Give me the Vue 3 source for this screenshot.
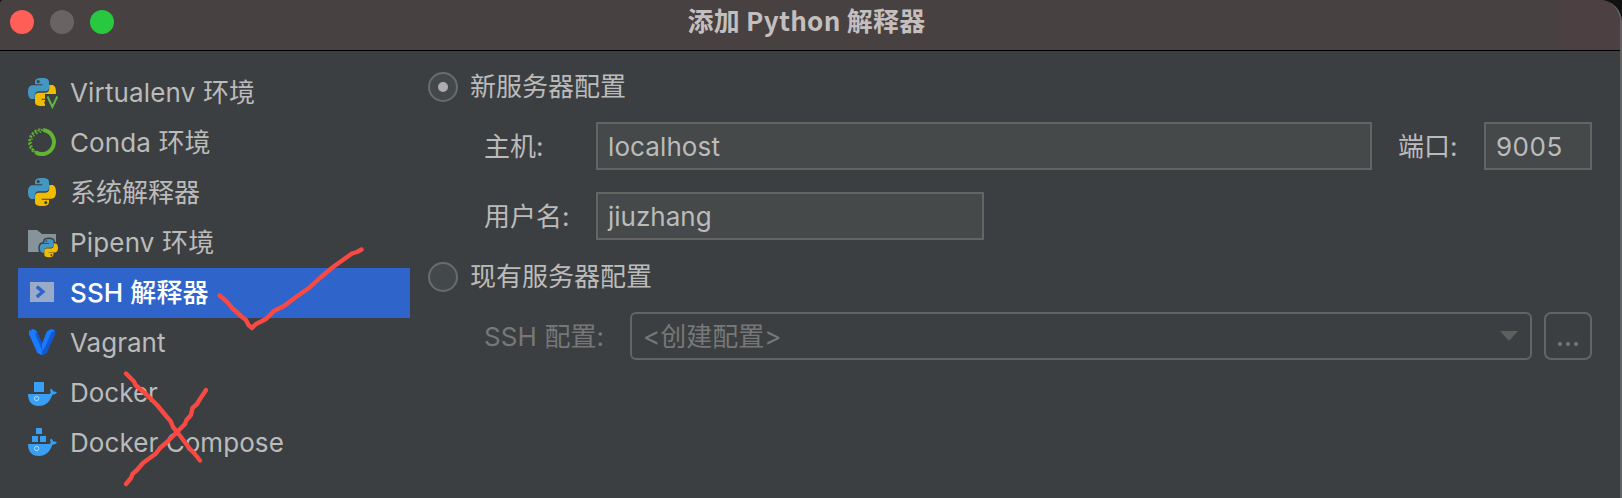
<script setup>
const items = [
  { label: 'Virtualenv 环境', icon: 'virtualenv', cls: 'w-virtualenv' },
  { label: 'Conda 环境', icon: 'conda', cls: 'w-conda' },
  { label: '系统解释器', icon: 'python', cls: 'w-system' },
  { label: 'Pipenv 环境', icon: 'pipenv', cls: 'w-pipenv' },
  { label: 'SSH 解释器', icon: 'ssh', cls: 'w-ssh', selected: true },
  { label: 'Vagrant', icon: 'vagrant', cls: 'w-vagrant' },
  { label: 'Docker', icon: 'docker', cls: 'w-docker' },
  { label: 'Docker Compose', icon: 'compose', cls: 'w-compose' },
]
</script>

<template>
  <div class="backdrop">
    <div class="window">
      <header class="titlebar">
        <div class="lights">
          <span class="light close"></span>
          <span class="light minimize"></span>
          <span class="light zoom"></span>
        </div>
        <h1 class="title">添加 Python 解释器</h1>
      </header>

      <main class="body">
        <svg class="defs" width="0" height="0" aria-hidden="true">
          <defs>
            <path id="snake" fill-rule="evenodd" d="M14 0C9 0 7 1.2 7 4V6.3H14.3V7.3H4.6C1.6 7.3 0 9.8 0 14C0 18.4 1.5 21 4.3 21H6.7V17.6C6.7 15 8.5 13.3 11 13.3H17.3C19.6 13.3 21 12 21 9.8V4C21 1.2 19 0 14 0ZM10.2 1.9A1.5 1.5 0 1 1 10.2 4.9A1.5 1.5 0 1 1 10.2 1.9Z" />
            <g id="python">
              <use href="#snake" fill="#4397c4" />
              <use href="#snake" fill="#f0bc00" transform="rotate(180 14 14)" />
            </g>
            <g id="whale">
              <path fill="#389ff5" d="M0 14H21.4C22.6 13.6 22.9 12.9 22.5 11.8C22 10.6 22.2 9.4 23 8.6C24.2 9.4 25 10.4 25.2 11.6C26.6 11.3 27.9 11.6 29 12.3C28 13.8 26.4 14.6 24.3 14.7C22 21.7 17.6 26 10.8 26C3.8 26 0 21.6 0 14Z" />
              <circle cx="8.6" cy="18.5" r="2.2" fill="none" stroke="#b8dcf8" stroke-width="1" />
            </g>
          </defs>
        </svg>

        <nav class="sidebar">
          <div v-for="item in items" :key="item.label" class="item" :class="{ selected: item.selected }">
            <svg class="icon" viewBox="0 0 32 32">
              <g v-if="item.icon === 'virtualenv'" transform="translate(2 2)">
                <use href="#python" />
                <path d="M17 16H32V32H17Z" fill="#3c3f41" />
                <path d="M19.5 18.5L24.4 29L29.3 18.5" fill="none" stroke="#62b543" stroke-width="2" />
              </g>
              <g v-else-if="item.icon === 'conda'" fill="none" stroke="#62b533">
                <path d="M17.2 4.1A12 12 0 1 1 9.6 26.2" stroke-width="4" />
                <path d="M9.6 26.2A12 12 0 0 1 17.2 4.1" stroke-width="1.8" stroke-dasharray="2 1.3" />
                <path d="M8 24.2A11 11 0 0 1 15.5 6" stroke-width="1.5" stroke-dasharray="1.5 2.2" />
                <path d="M7.2 26A13.3 13.3 0 0 1 15.5 2.8" stroke-width="1.3" stroke-dasharray="2.3 1.7" />
              </g>
              <use v-else-if="item.icon === 'python'" href="#python" x="2" y="2" />
              <g v-else-if="item.icon === 'pipenv'">
                <path d="M2 4H11L16 8H30V26H2Z" fill="#87939a" />
                <g transform="translate(13.8 13) scale(.65)">
                  <g fill="#3c3f41" stroke="#3c3f41" stroke-width="4.500">
                    <use href="#snake" />
                    <use href="#snake" transform="rotate(180 14 14)" />
                  </g>
                  <use href="#python" />
                </g>
              </g>
              <g v-else-if="item.icon === 'ssh'">
                <path d="M4 6H28V26H4Z" fill="#9aabca" />
                <path d="M10.8 10.6L16.8 15.8L10.8 21" fill="none" stroke="#2f65ca" stroke-width="3.5" />
              </g>
              <g v-else-if="item.icon === 'vagrant'">
                <path d="M3 4.5L7 3L11 5.5L16 18L21 5.5L25 3L29 4.5V8L20.5 27L16 29.3L11.5 27L3 8Z" fill="#1868f2" />
                <path d="M5.5 4L7 3L11 5.3L10 8.5L16 20V29L11.5 27L3 8V4.5L6 6Z" fill="#1a7bff" />
                <path d="M11 5.3L16 18L17.8 22L16 24L9.3 8.2Z" fill="#1159d1" />
                <path d="M29 4.5V8L20.5 27L16 29.3V25L19.3 21L25.3 6.2Z" fill="#1159d1" />
                <path d="M21 5.5L25 3L29 4.5L25.3 6.2L18 23L16 24V18Z" fill="#1a7bff" />
              </g>
              <g v-else-if="item.icon === 'docker'" transform="translate(2 4)">
                <path d="M6 2H16V12H6Z" fill="#389ff5" />
                <use href="#whale" />
              </g>
              <g v-else transform="translate(2 4)">
                <path d="M8 -2H14V4H8ZM4 6H10V12H4ZM12 6H18V12H12Z" fill="#389ff5" />
                <use href="#whale" />
              </g>
            </svg>
            <span class="label" :class="item.cls">{{ item.label }}</span>
          </div>
        </nav>

        <section class="form">
          <div class="option">
            <span class="radio checked"></span><span>新服务器配置</span>
          </div>
          <div class="row">
            <span class="caption">主机:</span>
            <div class="field host"><span class="value t-host">localhost</span></div>
            <span class="port-caption">端口:</span>
            <div class="field port"><span class="value t-port">9005</span></div>
          </div>
          <div class="row second">
            <span class="caption">用户名:</span>
            <div class="field user"><span class="value">jiuzhang</span></div>
          </div>
          <div class="option">
            <span class="radio"></span><span>现有服务器配置</span>
          </div>
          <div class="row disabled">
            <span class="caption wide">SSH 配置:</span>
            <div class="combo">
              <span class="value">&lt;创建配置&gt;</span>
              <svg class="arrow" viewBox="0 0 18 10"><path d="M0 0H18L9 10Z" fill="#5e6060" /></svg>
            </div>
            <div class="more"><i></i><i></i><i></i></div>
          </div>
        </section>
      </main>
    </div>

    <svg class="marks" viewBox="0 0 1622 498">
      <path d="M219.5 295.5L224 299L229 304L232 308L239 314L242 317L246 320L248.5 325L252 328L256 324L266 319L274 311L284 306L296 297L309 288L321 277L333 267L345 258.500L352 253.500L357 252L361.500 249.500" />
      <path d="M126 373.500L134 381.500L135.500 385L148 396L157 405L167 417L170.500 421L173 427L178 433L184 441L190 449L194 453L200 460.500" />
      <path d="M206 390L200 399L197 404L192.500 408L191 415L186.500 420L185 424L178 431L167 442L160 448L156 453.500L143 463L137 470L132.500 474L131 478L126 484" />
    </svg>
  </div>
</template>

<style>
body {
  margin: 0;
  background: #3c3f41;
}
</style>

<style scoped>
.backdrop {
  position: relative;
  width: 1622px;
  height: 498px;
  overflow: hidden;
  background: #111;
  font-family: Inter, "Noto Sans CJK SC", sans-serif;
  font-size: 26px;
  line-height: 32px;
  color: #bbb;
  white-space: nowrap;
}
.window {
  box-sizing: border-box;
  height: 498px;
  border-right: 2px solid #626263;
  border-radius: 4px 22px 0 0;
  overflow: hidden;
  background: #3c3f41;
}
.titlebar {
  display: grid;
  grid-template-columns: 1fr auto 1fr;
  height: 50px;
  border-bottom: 1px solid #000;
  background: linear-gradient(90deg, #484141 0 1560px, #4c4042 1564px);
}
.lights {
  display: flex;
  gap: 16px;
  padding: 10px 0 0 10px;
}
.light {
  width: 24px;
  height: 24px;
  border-radius: 50%;
}
.close { background: #ff5f57; }
.minimize { background: #696363; }
.zoom { background: #28c840; }
.title {
  margin: 0;
  padding-right: 7px;
  font: 700 26px/40px "Noto Sans CJK SC", sans-serif;
  letter-spacing: .28px;
  color: #c4bfbf;
}
.body {
  display: flex;
  padding: 17px 28px 0 18px;
}
.defs { position: absolute; }
.sidebar {
  width: 392px;
  flex: none;
}
.item {
  box-sizing: border-box;
  display: flex;
  align-items: center;
  height: 50px;
  padding: 0 0 2px 8px;
  gap: 12px;
}
.item.selected {
  background: #2f65ca;
  color: #fff;
  font-weight: 500;
}
.label, .caption, .port-caption, .value { padding-top: 2px; }
.w-virtualenv { letter-spacing: .15px; }
.w-conda { letter-spacing: .1px; }
.w-pipenv { letter-spacing: .17px; }
.w-ssh { letter-spacing: .12px; }
.w-compose { letter-spacing: .07px; }
.t-host { letter-spacing: .1px; }
.t-port { letter-spacing: .5px; }
.icon {
  width: 32px;
  height: 32px;
  overflow: visible;
}
.form {
  flex: 1;
  padding: 1px 0 0 18px;
}
.option {
  display: flex;
  align-items: center;
  gap: 12px;
  height: 36px;
}
.radio {
  box-sizing: border-box;
  display: grid;
  place-items: center;
  width: 30px;
  height: 30px;
  border: 2px solid #6b6b6b;
  border-radius: 50%;
  background: #43494a;
}
.radio.checked::after {
  content: "";
  width: 10px;
  height: 10px;
  border-radius: 50%;
  background: #adadad;
}
.row {
  display: flex;
  align-items: center;
  height: 48px;
  margin: 17px 0 22px;
  padding-left: 56px;
}
.row.second {
  margin: 0 0 19px;
}
.caption { width: 112px; }
.caption.wide { width: 146px; letter-spacing: .1px; }
.field, .combo, .more {
  box-sizing: border-box;
  height: 48px;
  border: 2px solid #646464;
}
.field {
  display: flex;
  align-items: center;
  padding-left: 10px;
  background: #45494a;
}
.host { width: 776px; }
.port-caption { width: 86px; margin-left: 26px; }
.port { width: 108px; }
.user { width: 388px; }
.disabled { color: #777; }
.combo {
  display: flex;
  align-items: center;
  justify-content: space-between;
  width: 902px;
  padding: 0 12px 0 11px;
  border-radius: 6px;
}
.arrow { width: 18px; height: 10px; }
.more {
  display: flex;
  justify-content: center;
  align-items: flex-end;
  gap: 4px;
  width: 48px;
  margin-left: 12px;
  padding-bottom: 12px;
  border-radius: 7px;
}
.more i {
  width: 4px;
  height: 4px;
  border-radius: 50%;
  background: #777;
}
.marks {
  position: absolute;
  inset: 0;
  width: 1622px;
  height: 498px;
  fill: none;
  stroke: #fa4943;
  stroke-width: 4.400;
  stroke-linecap: round;
  stroke-linejoin: round;
}
</style>
